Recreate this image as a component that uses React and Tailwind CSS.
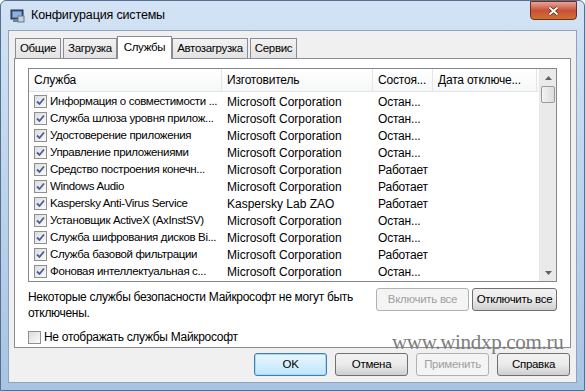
const rows = [
  ['Информация о совместимости ...', 'Microsoft Corporation', 'Остан...'],
  ['Служба шлюза уровня прилож...', 'Microsoft Corporation', 'Остан...'],
  ['Удостоверение приложения', 'Microsoft Corporation', 'Остан...'],
  ['Управление приложениями', 'Microsoft Corporation', 'Остан...'],
  ['Средство построения конечн...', 'Microsoft Corporation', 'Работает'],
  ['Windows Audio', 'Microsoft Corporation', 'Работает'],
  ['Kaspersky Anti-Virus Service', 'Kaspersky Lab ZAO', 'Работает'],
  ['Установщик ActiveX (AxInstSV)', 'Microsoft Corporation', 'Остан...'],
  ['Служба шифрования дисков Bi...', 'Microsoft Corporation', 'Остан...'],
  ['Служба базовой фильтрации', 'Microsoft Corporation', 'Работает'],
  ['Фоновая интеллектуальная с...', 'Microsoft Corporation', 'Остан...'],
];

const tabs = ['Общие', 'Загрузка', 'Службы', 'Автозагрузка', 'Сервис'];

function Check({ checked }) {
  return (
    <div className="w-[13px] h-[13px] border border-[#8f8f8f] bg-gradient-to-br from-[#dcdcdc] to-[#fbfbfb] flex items-center justify-center shrink-0">
      {checked && (
        <svg width="9" height="9" viewBox="0 0 9 9">
          <path d="M1 4.5 L3.5 7 L8 1.5" fill="none" stroke="#4a5f97" strokeWidth="1.8" />
        </svg>
      )}
    </div>
  );
}

function Btn({ children, disabled, def, w = 'w-[73px]' }) {
  return (
    <div
      className={`${w} h-[23px] rounded-[3px] border flex items-center justify-center whitespace-nowrap text-[11.5px] tracking-[-0.3px] ${
        disabled
          ? 'border-[#adb2b5] bg-[#f4f4f4] text-[#a0a0a0]'
          : def
          ? 'border-[#3c7fb1] bg-gradient-to-b from-[#eaf6fd] to-[#bee6fd] text-black shadow-[inset_0_0_0_1px_#a7d9f5]'
          : 'border-[#707070] bg-gradient-to-b from-[#f2f2f2] via-[#ebebeb] to-[#cfcfcf] text-black'
      }`}
    >
      {children}
    </div>
  );
}

export default function App() {
  return (
    <div
      className="w-[585px] h-[391px] relative overflow-hidden bg-gradient-to-b from-[#d3e3f5] via-[#bcd3ec] to-[#a9c3e3] border border-[#55708f] rounded-t-[6px] text-[12px] text-black"
      style={{ fontFamily: '"Liberation Sans", Arial, sans-serif' }}
    >
      {/* title bar */}
      <div className="h-[29px] flex items-center pl-[8px]">
        <svg width="16" height="16" viewBox="0 0 16 16" className="mr-[6px]">
          <rect x="2" y="2" width="12" height="9" fill="#3b5a8c" stroke="#1e3050" />
          <rect x="3.5" y="3.5" width="9" height="6" fill="#8fb0de" />
          <path d="M4 13 L13 13" stroke="#6e7f95" strokeWidth="2" />
          <rect x="9" y="8" width="6" height="6" fill="#c9cfd8" stroke="#6f7886" />
        </svg>
        <span className="text-[12.5px] text-black tracking-[-0.15px]">Конфигурация системы</span>
      </div>
      <div className="absolute top-0 right-[7px] w-[47px] h-[19px] rounded-b-[4px] border border-[#6e2c22] bg-gradient-to-b from-[#e8a394] via-[#c7503a] to-[#d1722a] flex items-center justify-center">
        <svg width="11" height="10" viewBox="0 0 11 10">
          <path d="M1.5 1.5 L9.5 8.5 M9.5 1.5 L1.5 8.5" stroke="#4c1b12" strokeWidth="3.2" />
          <path d="M1.5 1.5 L9.5 8.5 M9.5 1.5 L1.5 8.5" stroke="#ffffff" strokeWidth="2" />
        </svg>
      </div>

      {/* client area */}
      <div className="mx-[7px] h-[353px] bg-[#f0f0f0] border border-[#8ea4be] flex flex-col px-[5px]">
        {/* tabs */}
        <div className="flex items-end h-[27px] pl-[1px] gap-[2px] text-[11.5px] tracking-[-0.35px]">
          {tabs.map((t, i) =>
            i === 2 ? (
              <div
                key={t}
                className="h-[23px] px-[6px] border border-b-0 border-[#898c95] bg-white flex items-center -mb-[1px] z-10 -mx-[2px]"
              >
                {t}
              </div>
            ) : (
              <div
                key={t}
                className="h-[20px] px-[4px] border border-b-0 border-[#898c95] bg-gradient-to-b from-[#f2f2f2] to-[#e3e3e3] flex items-center"
              >
                {t}
              </div>
            )
          )}
        </div>

        {/* panel */}
        <div className="h-[290px] bg-white border border-[#898c95] flex flex-col px-[13px] pt-[9px]">
          <div className="h-[214px] border border-[#828790] flex">
            <div className="flex-1 flex flex-col overflow-hidden">
              <div className="h-[23px] flex border-b border-[#e5e5e5] bg-gradient-to-b from-white to-[#f6f7f8] shrink-0 tracking-[-0.2px]">
                <div className="w-[193px] pl-[5px] flex items-center border-r border-[#e5e5e5]">Служба</div>
                <div className="w-[151px] pl-[5px] flex items-center border-r border-[#e5e5e5]">Изготовитель</div>
                <div className="w-[60px] pl-[5px] flex items-center border-r border-[#e5e5e5] whitespace-nowrap overflow-hidden">Состоя...</div>
                <div className="w-[104px] pl-[5px] flex items-center border-r border-[#e5e5e5] whitespace-nowrap overflow-hidden">Дата отключе...</div>
              </div>
              <div className="pt-[1px]">
                {rows.map((r) => (
                  <div key={r[0]} className="h-[17px] flex items-center whitespace-nowrap">
                    <div className="w-[193px] pl-[5px] flex items-center gap-[3px] overflow-hidden">
                      <Check checked />
                      <span className="text-[11.5px] tracking-[-0.35px]">{r[0]}</span>
                    </div>
                    <div className="w-[151px] pl-[5px] overflow-hidden">{r[1]}</div>
                    <div className="w-[60px] pl-[5px] overflow-hidden tracking-[-0.2px]">{r[2]}</div>
                  </div>
                ))}
              </div>
            </div>
            {/* scrollbar */}
            <div className="w-[17px] bg-[#eaeaea] flex flex-col border-l border-[#e8e8e8]">
              <div className="h-[17px] flex items-center justify-center">
                <svg width="7" height="4" viewBox="0 0 7 4">
                  <path d="M0 4 L3.5 0 L7 4 Z" fill="#606060" />
                </svg>
              </div>
              <div className="h-[17px] mx-[1px] rounded-[2px] border border-[#9a9a9a] bg-gradient-to-r from-[#f3f3f3] to-[#dcdcdc]" />
              <div className="flex-1" />
              <div className="h-[17px] flex items-center justify-center">
                <svg width="7" height="4" viewBox="0 0 7 4">
                  <path d="M0 0 L3.5 4 L7 0 Z" fill="#606060" />
                </svg>
              </div>
            </div>
          </div>

          <div className="flex mt-[6px]">
            <div className="flex-1 pt-[1px] leading-[16px] tracking-[-0.3px]">
              Некоторые службы безопасности Майкрософт не могут быть
              <br />
              отключены.
            </div>
            <div className="flex gap-[3px] items-start">
              <Btn disabled w="w-[93px]">Включить все</Btn>
              <Btn w="w-[85px]">Отключить все</Btn>
            </div>
          </div>

          <div className="flex items-center gap-[3px] mt-[7px] tracking-[-0.3px]">
            <Check />
            <span>Не отображать службы Майкрософт</span>
          </div>
        </div>

        {/* bottom buttons */}
        <div className="flex justify-end gap-[8px] mt-[5px] pr-[1px]">
          <Btn def>OK</Btn>
          <Btn>Отмена</Btn>
          <Btn disabled>Применить</Btn>
          <Btn>Справка</Btn>
        </div>
      </div>

      <div
        className="absolute left-[391px] top-[331px] text-[21px] text-[#7d7d7d] leading-none tracking-[-0.3px]"
        style={{ fontFamily: '"Liberation Serif", serif' }}
      >
        www.windxp.com.ru
      </div>
    </div>
  );
}
